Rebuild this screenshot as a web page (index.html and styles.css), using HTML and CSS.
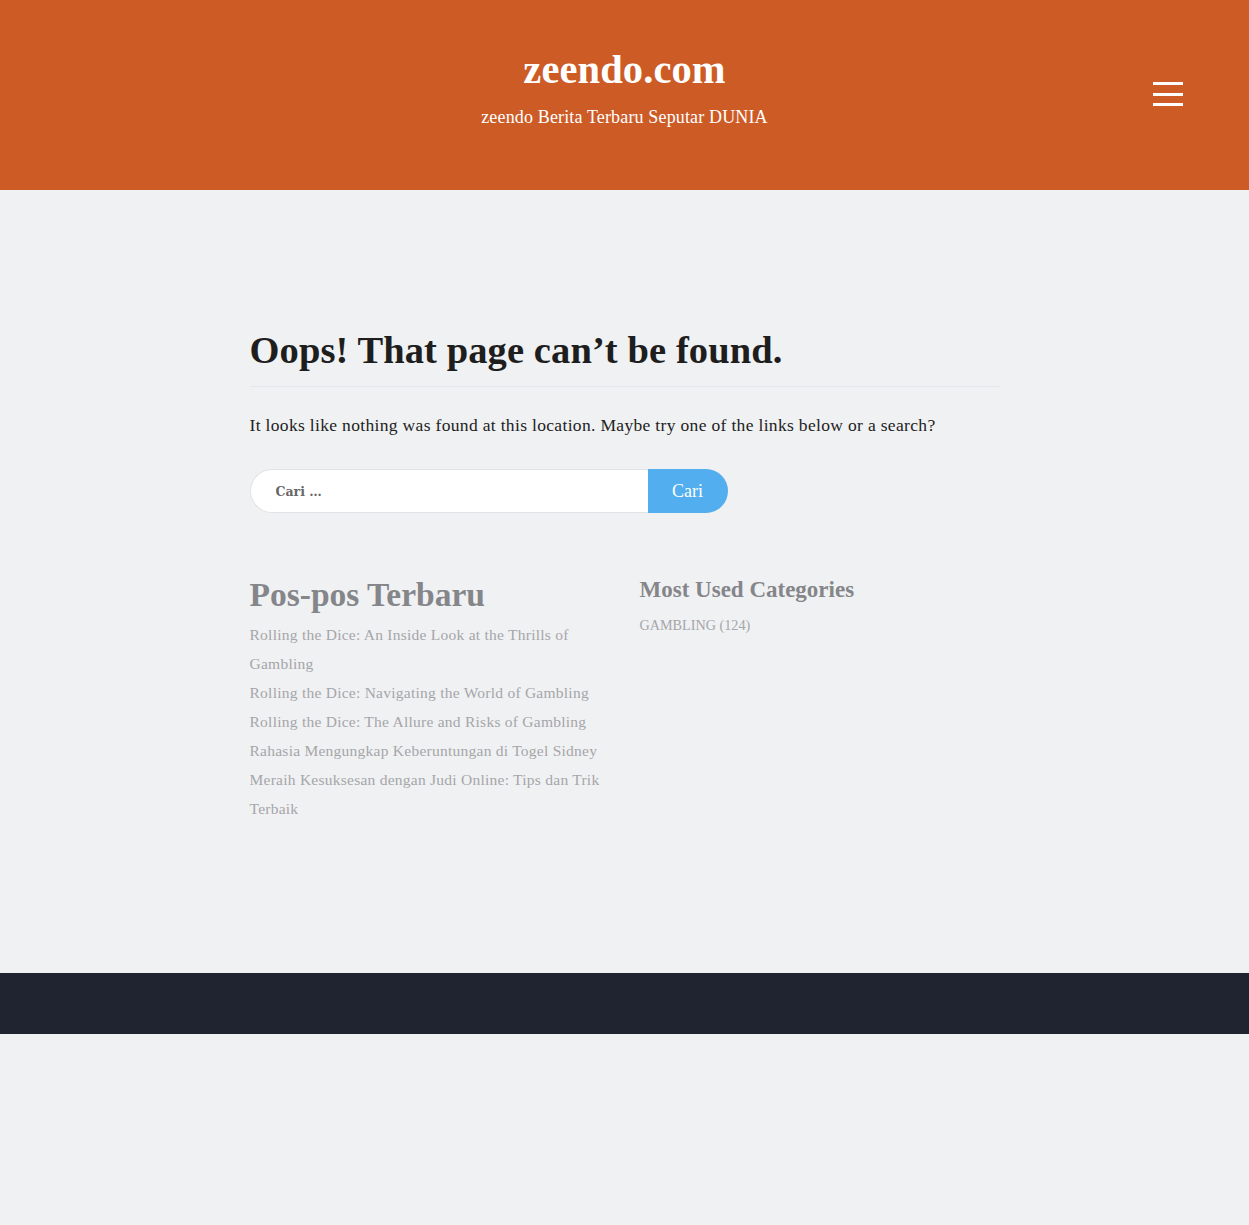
FILE: index.html
```html
<!DOCTYPE html>
<html lang="id">
<head>
<meta charset="utf-8">
<title>zeendo.com</title>
<link rel="stylesheet" href="styles.css">
</head>
<body>
<header class="site-header">
  <div class="branding">
    <div class="site-title">zeendo.com</div>
    <div class="site-desc">zeendo Berita Terbaru Seputar DUNIA</div>
  </div>
  <button class="menu-toggle" aria-label="Menu">
    <span></span><span></span><span></span>
  </button>
</header>
<main class="content">
  <h1 class="page-title">Oops! That page can’t be found.</h1>
  <p class="lead">It looks like nothing was found at this location. Maybe try one of the links below or a search?</p>
  <form class="search">
    <input class="search-field" type="search" placeholder="Cari …">
    <button class="search-btn" type="button">Cari</button>
  </form>
  <div class="widgets">
    <section class="widget recent">
      <h2 class="w-title big">Pos-pos Terbaru</h2>
      <ul class="w-list">
        <li><a>Rolling the Dice: An Inside Look at the Thrills of Gambling</a></li>
        <li><a>Rolling the Dice: Navigating the World of Gambling</a></li>
        <li><a>Rolling the Dice: The Allure and Risks of Gambling</a></li>
        <li><a>Rahasia Mengungkap Keberuntungan di Togel Sidney</a></li>
        <li><a>Meraih Kesuksesan dengan Judi Online: Tips dan Trik Terbaik</a></li>
      </ul>
    </section>
    <section class="widget cats">
      <h2 class="w-title small">Most Used Categories</h2>
      <ul class="w-list cat-list">
        <li><a>GAMBLING</a> (124)</li>
      </ul>
    </section>
  </div>
</main>
<footer class="site-footer"></footer>
</body>
</html>
```
FILE: styles.css
```css
* { box-sizing: border-box; }
html, body { margin: 0; padding: 0; }
body {
  background: #f0f1f3;
  font-family: "Liberation Serif", "DejaVu Serif", serif;
  color: #222;
}
.site-header {
  background: #cd5b26;
  height: 190px;
  position: relative;
  display: flex;
  justify-content: center;
  align-items: flex-start;
}
.branding { text-align: center; padding-top: 46px; }
.site-title {
  font-size: 40.5px;
  font-weight: bold;
  color: #fff;
  line-height: 48px;
  letter-spacing: 0.1px;
}
.site-desc {
  color: #fff;
  font-size: 18px;
  line-height: 24px;
  margin-top: 11px;
  letter-spacing: 0.15px;
}
.menu-toggle {
  position: absolute;
  right: 66px;
  top: 82px;
  width: 30px;
  height: 24px;
  padding: 0;
  border: 0;
  background: none;
  display: flex;
  flex-direction: column;
  justify-content: space-between;
}
.menu-toggle span { display: block; height: 3px; width: 30px; background: #fff; }
.content {
  width: 750px;
  margin: 0 auto;
  padding: 0;
}
.page-title {
  margin: 136px 0 0;
  font-size: 38.5px;
  font-weight: bold;
  color: #1e1e1e;
  line-height: 48px;
  letter-spacing: 0.1px;
  padding-bottom: 12px;
  border-bottom: 1px solid #e6e7ea;
}
.lead {
  margin: 26px 0 0;
  font-size: 17.5px;
  line-height: 24px;
  letter-spacing: 0.33px;
  color: #222;
}
.search {
  display: flex;
  margin-top: 32px;
  width: 478px;
  height: 44px;
}
.search-field {
  flex: 1;
  border: 1px solid #e2e3e6;
  border-right: 0;
  border-radius: 22px 0 0 22px;
  background: #fff;
  padding: 0 0 0 25px;
  font-family: "DejaVu Serif", serif;
  font-size: 12.5px;
  font-weight: bold;
  color: #666;
  outline: none;
}
.search-field::placeholder { color: #666; }
.search-btn {
  width: 80px;
  border: 0;
  border-radius: 0 22px 22px 0;
  background: #52aeee;
  color: #fff;
  font-family: "Liberation Serif", serif;
  font-size: 18px;
  padding: 0;
}
.widgets {
  display: grid;
  grid-template-columns: 360px 360px;
  column-gap: 30px;
  margin-top: 62px;
}
.w-title {
  margin: 0;
  color: #85868a;
  font-weight: bold;
}
.w-title.big { font-size: 33.5px; line-height: 40px; }
.w-title.small { font-size: 23px; line-height: 30px; }
.w-list { list-style: none; margin: 0; padding: 0; }
.recent .w-list { margin-top: 5px; }
.w-list li {
  font-size: 15.5px;
  line-height: 29px;
  letter-spacing: 0.25px;
  color: #a5a6a9;
}
.w-list a { color: #a5a6a9; }
.cat-list { margin-top: 8px; }
.cat-list li { font-size: 14.2px; line-height: 24px; letter-spacing: 0; }
.site-footer {
  background: #1f2430;
  height: 61px;
  margin-top: 150px;
}
```
